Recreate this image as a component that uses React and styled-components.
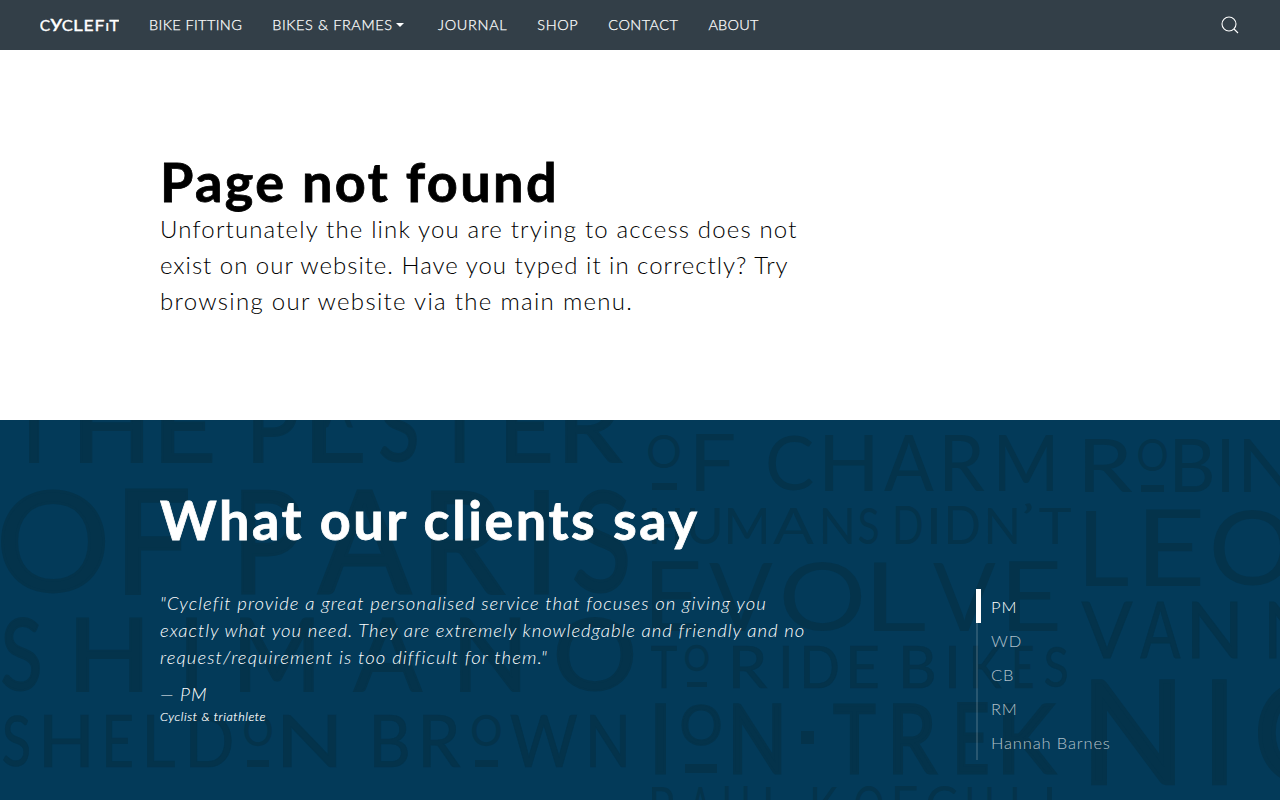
import React, { useMemo, useState } from 'react'
import styled, { createGlobalStyle } from 'styled-components'

const GlobalStyle = createGlobalStyle`
  * {
    box-sizing: border-box;
  }
  body {
    margin: 0;
    background: #fff;
    font-family: Lato, 'Open Sans', sans-serif;
    overflow: hidden;
  }
  h1, h2, p, ul {
    margin: 0;
    padding: 0;
  }
`

const menu = [
  { label: 'BIKE FITTING', spacing: 0.38 },
  { label: 'BIKES & FRAMES', spacing: 0.58, dropdown: true },
  { label: 'JOURNAL', spacing: 0.68 },
  { label: 'SHOP', spacing: 0.6 },
  { label: 'CONTACT', spacing: 0.45 },
  { label: 'ABOUT', spacing: 0.2 },
]

const intro = [
  { text: 'Unfortunately the link you are trying to access does not', spacing: 1.16 },
  { text: 'exist on our website. Have you typed it in correctly? Try', spacing: 0.98 },
  { text: 'browsing our website via the main menu.', spacing: 1.3 },
]

const quote = [
  { text: '"Cyclefit provide a great personalised service that focuses on giving you', spacing: 1.02 },
  { text: 'exactly what you need. They are extremely knowledgable and friendly and no', spacing: 0.97 },
  { text: 'request/requirement is too difficult for them."', spacing: 1.1 },
]

const clients = ['PM', 'WD', 'CB', 'RM', 'Hannah Barnes']

// every glyph is [character, left, right], with optional own top and bottom
const logo = [
  {
    top: 19, bottom: 31, outline: 2,
    glyphs: [['C', 0.2, 10], ['y', 10.2, 22.5], ['C', 22.3, 32.7], ['L', 34.6, 42.8], ['E', 45, 53.2], ['F', 56, 64.2], ['I', 66.3, 68, 22.3, 31], ['T', 69.2, 79]],
  },
]

const wall = [
  {
    top: -30, bottom: 42.5, outline: 2,
    glyphs: [['T', 9, 59], ['H', 80, 144], ['E', 161, 213], ['P', 253, 297], ['L', 312, 363], ['A', 323, 353, -25, 7], ['S', 380, 417], ['T', 435, 484], ['E', 506, 551], ['R', 565, 623]],
  },
  {
    top: 68, bottom: 174, outline: 2,
    glyphs: [['O', 0, 106], ['F', 125, 189], ['P', 241, 301], ['A', 317, 413], ['R', 431, 506], ['I', 534, 549], ['S', 574, 628]],
  },
  {
    top: 196, bottom: 272, outline: 2,
    glyphs: [['S', 2, 40], ['H', 76, 143], ['I', 186, 197], ['M', 240, 314], ['A', 353, 423], ['N', 460, 521], ['O', 556, 634]],
  },
  {
    top: 294, bottom: 347, outline: 1,
    glyphs: [['S', 3, 29], ['H', 44, 89], ['E', 106, 132], ['L', 147, 175], ['D', 190, 232], ['O', 244, 272, 294, 327], ['N', 283, 337], ['B', 374, 408], ['R', 423, 461], ['O', 472, 501, 294, 327], ['W', 510, 577], ['N', 590, 626]],
    bars: [[247, 340, 22, 7], [475, 340, 23, 7]],
  },
  {
    top: 14, bottom: 71, outline: 0,
    glyphs: [['O', 648, 680, 13, 48], ['F', 696, 734], ['C', 768, 813], ['H', 825, 873], ['A', 884, 934], ['R', 945, 985], ['M', 999, 1053]],
    bars: [[652, 63, 25, 7]],
  },
  {
    top: 87, bottom: 124, outline: 0,
    glyphs: [['H', 652, 680], ['U', 690, 720], ['M', 728, 766], ['A', 773, 814], ['N', 823, 852], ['S', 859, 878], ['D', 896, 922], ['I', 931, 937], ['D', 948, 979], ['N', 988, 1017], ['’', 1024, 1032, 82, 93], ['T', 1039, 1071]],
  },
  {
    top: 141, bottom: 211, outline: 0,
    glyphs: [['E', 652, 699], ['V', 709, 773], ['O', 783, 862], ['L', 874, 925], ['V', 933, 996], ['E', 1009, 1058]],
  },
  {
    top: 225, bottom: 268, outline: 1,
    glyphs: [['T', 651, 677], ['O', 685, 709, 224, 252], ['R', 733, 768], ['I', 783, 789], ['D', 804, 838], ['E', 850, 878], ['B', 903, 934], ['I', 949, 956], ['K', 973, 1002], ['E', 1015, 1033], ['S', 1045, 1067]],
    bars: [[687, 262, 20, 5]],
  },
  {
    top: 282, bottom: 354, outline: 3,
    glyphs: [['I', 655, 666], ['O', 681, 721, 282, 326], ['N', 733, 782], ['T', 833, 876], ['R', 893, 938], ['E', 957, 988], ['K', 1003, 1057]],
    bars: [[685, 344, 32, 9], [801, 311, 13, 13]],
  },
  {
    top: 366, bottom: 406, outline: 0,
    glyphs: [['P', 652, 673], ['A', 689, 712], ['U', 725, 748], ['L', 766, 785], ['K', 813, 838], ['O', 855, 883], ['E', 895, 917], ['C', 927, 957], ['H', 968, 992], ['L', 1013, 1030], ['I', 1047, 1052]],
  },
  {
    top: 18, bottom: 72, outline: 0,
    glyphs: [['R', 1085, 1133], ['O', 1138, 1167, 18, 51], ['B', 1175, 1212], ['I', 1222, 1229], ['N', 1244, 1290]],
    bars: [[1141, 65, 23, 7]],
  },
  {
    top: 89, bottom: 166, outline: 0,
    glyphs: [['L', 1086, 1128], ['E', 1146, 1201], ['O', 1213, 1292]],
  },
  {
    top: 180, bottom: 238, outline: 1,
    glyphs: [['V', 1081, 1133], ['A', 1140, 1181], ['N', 1192, 1238], ['N', 1269, 1315]],
  },
  {
    top: 257, bottom: 365, outline: 3,
    glyphs: [['N', 1091, 1176], ['I', 1212, 1227], ['C', 1257, 1345]],
  },
]

// stretches each character so that its ink fills the given box
function fitGlyphs(rows) {
  const ctx = document.createElement('canvas').getContext('2d')
  ctx.font = '400 100px Lato'
  return rows.flatMap((row) =>
    row.glyphs.map(([char, left, right, top = row.top, bottom = row.bottom]) => {
      const m = ctx.measureText(char)
      const half = row.outline / 2
      const inkLeft = m.actualBoundingBoxLeft + half
      const inkBottom = m.actualBoundingBoxDescent + half
      const sx = (right - left) / (m.actualBoundingBoxRight + half + inkLeft)
      const sy = (bottom - top) / (m.actualBoundingBoxAscent + half + inkBottom)
      const x = left + inkLeft * sx
      const y = bottom - inkBottom * sy
      return { char, outline: row.outline, transform: `translate(${x} ${y}) scale(${sx} ${sy})` }
    })
  )
}

function Lettering({ rows }) {
  const glyphs = useMemo(() => fitGlyphs(rows), [rows])
  return (
    <>
      {glyphs.map((glyph, index) => (
        <Glyph key={index} transform={glyph.transform} $outline={glyph.outline}>{glyph.char}</Glyph>
      ))}
      {rows.flatMap((row) => row.bars || []).map(([x, y, w, h]) => (
        <Bar key={`${x}-${y}`} x={x} y={y} width={w} height={h} />
      ))}
    </>
  )
}

function App() {
  const [active, setActive] = useState(0)

  return (
    <>
      <GlobalStyle />
      <Navbar>
        <Logo viewBox="0 0 79 50" aria-label="Cyclefit">
          <Lettering rows={logo} />
        </Logo>
        <Menu>
          {menu.map((item) => (
            <MenuLink key={item.label} href="#" $spacing={item.spacing}>
              {item.label}
              {item.dropdown && <Caret />}
            </MenuLink>
          ))}
        </Menu>
        <SearchButton aria-label="Search">
          <svg width="20" height="20" viewBox="0 0 20 20" fill="none" stroke="#fff" strokeWidth="1.1">
            <circle cx="9" cy="9" r="7" />
            <path d="M14,14 L18,18 L14,14 Z" />
          </svg>
        </SearchButton>
      </Navbar>

      <NotFound>
        <Title>Page not found</Title>
        <Intro>
          {intro.map((line) => (
            <Line key={line.text} $spacing={line.spacing}>{line.text} </Line>
          ))}
        </Intro>
      </NotFound>

      <Testimonials>
        <Wall viewBox="0 0 1280 380" aria-hidden="true">
          <Lettering rows={wall} />
        </Wall>
        <Content>
          <ClientsTitle>What our clients say</ClientsTitle>
          <Columns>
            <Quote>
              <p>
                {quote.map((line) => (
                  <Line key={line.text} $spacing={line.spacing}>{line.text} </Line>
                ))}
              </p>
              <Author>— PM</Author>
              <Role>Cyclist &amp; triathlete</Role>
            </Quote>
            <ClientList>
              {clients.map((name, index) => (
                <Client key={name} $active={index === active} onClick={() => setActive(index)}>
                  {name}
                </Client>
              ))}
            </ClientList>
          </Columns>
        </Content>
      </Testimonials>
    </>
  )
}

const Navbar = styled.nav`
  display: flex;
  align-items: center;
  height: 50px;
  padding: 0 40px;
  background: #333f48;
`
const Glyph = styled.text`
  font-family: Lato, sans-serif;
  font-size: 100px;
  font-weight: 400;
  stroke-width: ${(props) => props.$outline}px;
`
const Bar = styled.rect`
  stroke: none;
`
const Logo = styled.svg`
  width: 79px;
  height: 50px;
  fill: #fff;
  stroke: #fff;
`
const Menu = styled.div`
  display: flex;
  flex: 1;
  gap: 30px;
  margin-left: 30px;
`
const MenuLink = styled.a`
  display: flex;
  align-items: center;
  font-size: 14.5px;
  font-weight: 300;
  line-height: 20px;
  letter-spacing: ${(props) => props.$spacing}px;
  color: #fff;
  -webkit-text-stroke: 0.25px #fff;
  text-decoration: none;
  white-space: nowrap;
`
const Caret = styled.span`
  margin: 0 4px 0 3.5px;
  border: 4px solid transparent;
  border-top-color: #fff;
  border-bottom: 0;
`
const SearchButton = styled.button`
  display: flex;
  padding: 0;
  border: 0;
  background: none;
  cursor: pointer;
`
const NotFound = styled.section`
  height: 370px;
  padding: 105px 160px 0;
`
const Title = styled.h1`
  font-size: 54px;
  font-weight: 700;
  line-height: 54px;
  letter-spacing: 2.4px;
  color: #000;
  -webkit-text-stroke: 0.8px #000;
`
const Intro = styled.p`
  margin-top: 2px;
  font-size: 24px;
  font-weight: 300;
  line-height: 36px;
  color: #000;
`
const Line = styled.span`
  display: block;
  white-space: nowrap;
  letter-spacing: ${(props) => props.$spacing}px;
`
const Testimonials = styled.section`
  display: grid;
  height: 380px;
  overflow: hidden;
  background: #033a59;
  color: #fff;
`
const Wall = styled.svg`
  grid-area: 1 / 1;
  width: 1280px;
  height: 380px;
  fill: #04334b;
  stroke: #04334b;
`
const Content = styled.div`
  grid-area: 1 / 1;
  z-index: 1;
  padding: 73px 160px 0;
`
const ClientsTitle = styled.h2`
  font-size: 54px;
  font-weight: 700;
  line-height: 54px;
  letter-spacing: 2.55px;
  -webkit-text-stroke: 0.8px #fff;
`
const Columns = styled.div`
  display: grid;
  grid-template-columns: 816px 1fr;
  margin-top: 42px;
`
const Quote = styled.div`
  padding-top: 1px;
  font-size: 18.5px;
  font-style: italic;
  font-weight: 300;
  line-height: 27px;
`
const Author = styled.div`
  margin-top: 10px;
  letter-spacing: 0.9px;
`
const Role = styled.div`
  font-size: 12.5px;
  font-weight: 300;
  line-height: 18px;
  letter-spacing: 0.6px;
  -webkit-text-stroke: 0.2px #fff;
`
const ClientList = styled.ul`
  height: 171px;
  list-style: none;
  border-left: 2px solid rgba(255, 255, 255, 0.15);
`
const Client = styled.li`
  height: 34px;
  margin-left: -2px;
  padding-left: 10px;
  border-left: 5px solid ${(props) => (props.$active ? '#fff' : 'transparent')};
  font-size: 16.5px;
  font-weight: 300;
  line-height: 36px;
  letter-spacing: 0.85px;
  color: ${(props) => (props.$active ? '#fff' : 'rgba(255, 255, 255, 0.7)')};
  cursor: pointer;
`

export default App
